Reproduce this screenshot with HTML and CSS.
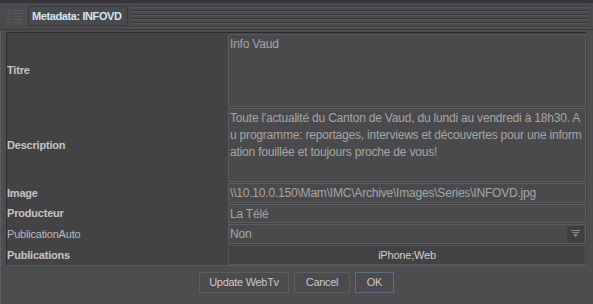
FILE: index.html
```html
<!DOCTYPE html>
<html>
<head>
<meta charset="utf-8">
<link rel="stylesheet" href="styles.css">
</head>
<body>
<div class="window">
  <div class="titlebar">
    <div class="grip">
      <div class="grip-col small"><i></i><i></i><i></i><i></i><i></i></div>
      <div class="grip-col"><i></i><i></i><i></i><i></i><i></i></div>
    </div>
    <div class="tab">Metadata: INFOVD</div>
    <div class="stripes"></div>
  </div>
  <div class="body">
    <div class="panel">
      <div class="label bold">Titre</div>
      <div class="value box tall">Info Vaud</div>
      <div class="label bold">Description</div>
      <div class="value box tall desc">Toute l'actualité du Canton de Vaud, du lundi au vendredi à 18h30. Au programme: reportages, interviews et découvertes pour une information fouillée et toujours proche de vous!</div>
      <div class="label bold">Image</div>
      <div class="value box">\\10.10.0.150\Mam\IMC\Archive\Images\Series\INFOVD.jpg</div>
      <div class="label bold">Producteur</div>
      <div class="value box">La Télé</div>
      <div class="label">PublicationAuto</div>
      <div class="value box combo"><span>Non</span><span class="drop"><svg width="9" height="8" viewBox="0 0 9 8"><path d="M0 0.5h9M1 2.5h7M2.5 4.5h4" stroke="#8a8a8a" stroke-width="1"/><path d="M3 5h3l-1.5 2.5z" fill="#8a8a8a"/></svg></span></div>
      <div class="label bold">Publications</div>
      <div class="value pubs">iPhone;Web</div>
    </div>
    <div class="buttons">
      <button class="btn w-update">Update WebTv</button>
      <button class="btn w-cancel">Cancel</button>
      <button class="btn ok">OK</button>
    </div>
  </div>
</div>
</body>
</html>
```
FILE: styles.css
```css
* { box-sizing: border-box; }
html, body { margin: 0; padding: 0; }
body {
  width: 593px; height: 304px; overflow: hidden;
  background: #2f3036;
  font-family: "Liberation Sans", Arial, sans-serif;
}
.window {
  width: 593px; height: 304px;
  background: #4d4d4f;
  display: flex; flex-direction: column;
  border-top: 3px solid #35363c;
}
.titlebar {
  height: 27px;
  display: flex; align-items: center;
  padding: 0 5px 0 7px;
  background: #4b4b4d;
  border-bottom: 1px solid #3a3a3c;
}
.grip { display: flex; gap: 3px; margin-right: 5px; flex-shrink: 0; }
.grip-col { display: flex; flex-direction: column; gap: 2px; width: 9px; }
.grip-col.small { width: 4px; }
.grip-col i { display: block; height: 1px; background: #3a3a3c; border-bottom: 1px solid #5a5a5c; }
.tab {
  height: 20px; width: 100px; flex-shrink: 0;
  border: 1px solid #3a3a3c;
  background: #4a4a4c;
  color: #d4e6f6;
  font-weight: bold; font-size: 11px;
  white-space: nowrap; letter-spacing: -0.4px;
  display: flex; align-items: center; padding-left: 3px;
}
.stripes {
  flex: 1; height: 24px; margin-left: 3px;
  background: repeating-linear-gradient(to bottom, #4b4b4d 0 2px, #3c3c3e 2px 3px, #58585a 3px 4px);
}
.body {
  flex: 1;
  display: flex; flex-direction: column;
  padding: 2px 6px 4px 5px;
  border-left: 1px solid #5e5e60;
}
.panel {
  display: grid;
  grid-template-columns: 220px 1fr;
  grid-template-rows: 74px 75px 21px 20px 21px 21px;
  background: #434345;
  border-left: 1px solid #2e2e30;
  border-top: 1px solid #2e2e30;
  border-bottom: 1px solid #5a5a5c;
}
.label {
  display: flex; align-items: center;
  font-size: 11px; color: #b8b8b8;
  letter-spacing: -0.2px;
}
.label.bold { font-weight: bold; color: #c4c4c4; }
.value {
  font-size: 12px; color: #a6a6a6;
  letter-spacing: -0.2px;
  margin: 1px 1px 0 1px;
}
.box {
  background: #4a4a4c;
  border: 1px solid #5c5c5e;
  padding: 2px 1px;
  display: flex; align-items: center;
}
.box.tall { align-items: flex-start; }
.desc { word-break: break-all; line-height: 17px; padding-top: 1px; }
.combo { justify-content: space-between; padding-right: 1px; }
.drop {
  width: 17px; height: 17px; background: #404042;
  display: flex; align-items: center; justify-content: center;
}
.pubs {
  background: #424244;
  border: 1px solid #545456;
  display: flex; align-items: center; justify-content: center;
  color: #d0d0d0; font-size: 11px;
}
.buttons {
  flex: 1;
  display: flex; justify-content: center; align-items: center;
  gap: 5px;
  padding-bottom: 2px;
}
.btn {
  height: 21px;
  font-family: "Liberation Sans", Arial, sans-serif;
  font-size: 11px; color: #c8c8c8;
  letter-spacing: -0.3px;
  background: #4b4b4d;
  border: 1px solid #5c5c5e;
  padding: 0;
  width: 39px;
}
.btn.w-update { width: 90px; }
.btn.w-cancel { width: 56px; }
.btn.ok { border-color: #58708c; }
```
